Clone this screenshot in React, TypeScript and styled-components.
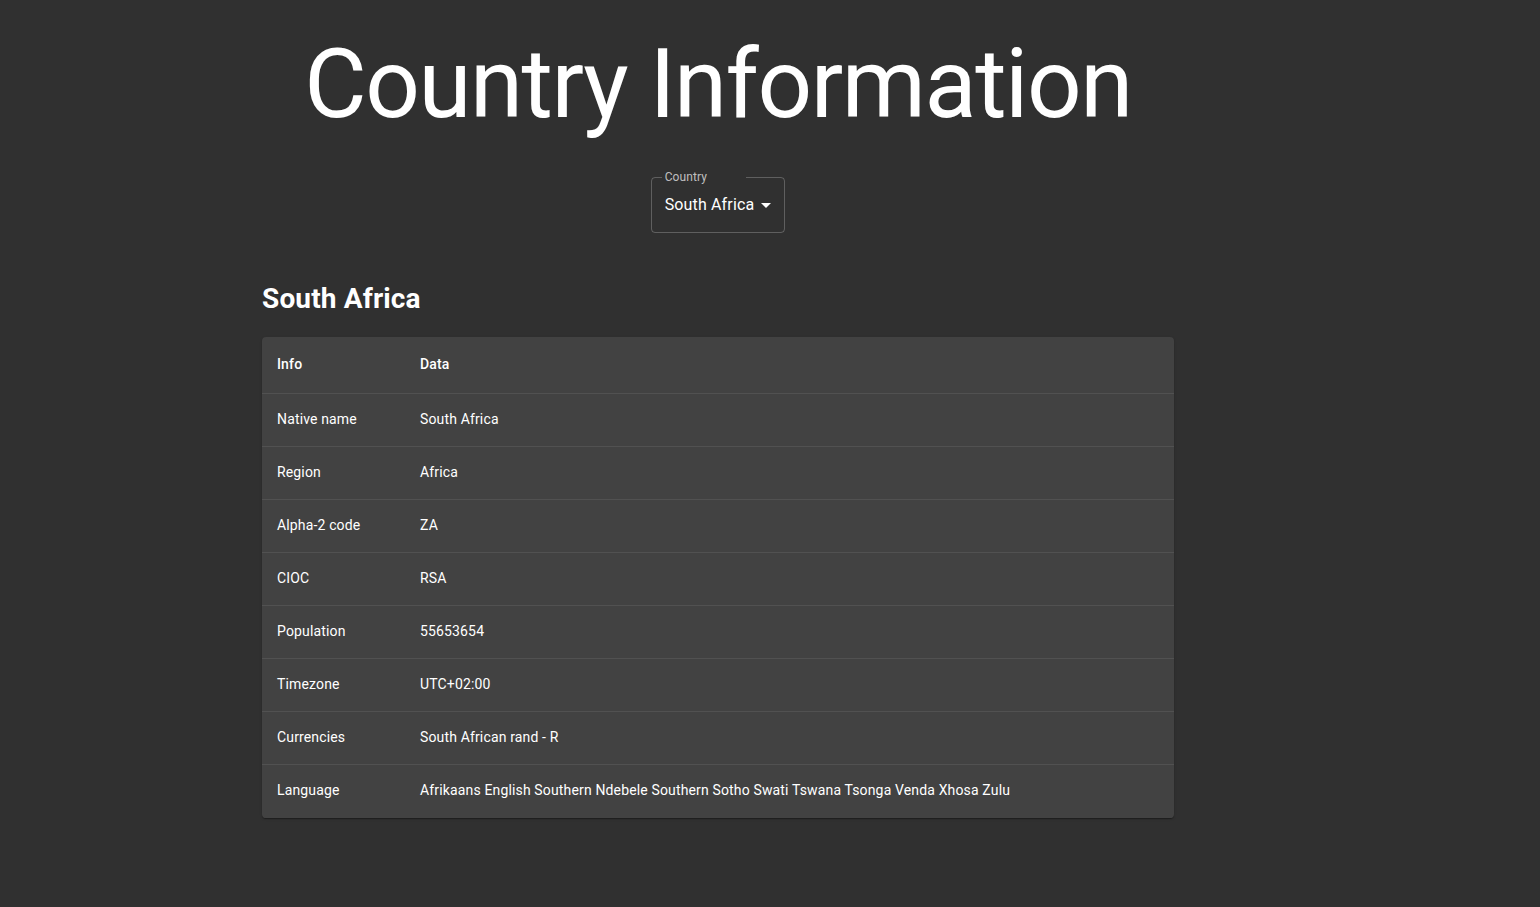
import React from "react";
import styled, { createGlobalStyle } from "styled-components";

const Global = createGlobalStyle`
  html, body { margin: 0; padding: 0; background: #303030; }
  body { font-family: Roboto, "Helvetica Neue", Arial, sans-serif; color: #fff; }
  * { box-sizing: border-box; }
`;

const Page = styled.div`
  width: 1540px;
  min-height: 907px;
  background: #303030;
  padding-top: 28px;
`;

const Container = styled.main`
  width: 960px;
  margin-left: 238px;
  padding: 0 24px;
  display: flex;
  flex-direction: column;
`;

const Title = styled.h1`
  margin: 0;
  font-family: Roboto, sans-serif;
  font-weight: 400;
  font-size: 96px;
  line-height: 112px;
  text-align: center;
  color: #fff;
  letter-spacing: -1.5px;
`;

const SelectRow = styled.div`
  display: flex;
  justify-content: center;
  margin-top: 37px;
`;

const SelectBox = styled.div`
  position: relative;
  height: 56px;
  border: 1px solid rgba(255, 255, 255, 0.23);
  border-radius: 4px;
  padding: 0 30px 1px 13px;
  display: flex;
  align-items: center;
  font-size: 16px;
  letter-spacing: 0.15px;
  color: #fff;
  cursor: pointer;
`;

const Notch = styled.span`
  position: absolute;
  top: -7px;
  left: 10px;
  width: 84px;
  height: 12px;
  background: #303030;
  padding-left: 3px;
  font-size: 12px;
  line-height: 12px;
  letter-spacing: 0.1px;
  color: rgba(255, 255, 255, 0.7);
`;

const Arrow = styled.svg`
  position: absolute;
  right: 6px;
  top: 15px;
  width: 24px;
  height: 24px;
  fill: #fff;
`;

const Heading = styled.h2`
  margin: 48px 0 0;
  font-size: 28px;
  font-weight: 700;
  line-height: 36px;
  letter-spacing: 0.15px;
  color: #fff;
`;

const Paper = styled.div`
  margin-top: 20px;
  background: #424242;
  border-radius: 4px;
  box-shadow: 0px 2px 1px -1px rgba(0,0,0,0.2), 0px 1px 1px 0px rgba(0,0,0,0.14), 0px 1px 3px 0px rgba(0,0,0,0.12);
  overflow: hidden;
`;

const Table = styled.table`
  width: 100%;
  border-collapse: collapse;
  font-size: 14px;
  letter-spacing: 0.15px;
`;

const Row = styled.tr<{ $last?: boolean }>`
  border-bottom: 1px solid ${(p) => (p.$last ? "#424242" : "#515151")};
`;

const Cell = styled.td<{ $head?: boolean; $first?: boolean }>`
  padding: ${(p) => (p.$head ? "17px 16px 19px 15px" : "15px 16px 17px 15px")};
  line-height: 20px;
  font-weight: ${(p) => (p.$head ? 500 : 400)};
  color: #fff;
  text-align: left;
  width: ${(p) => (p.$first ? "142px" : "auto")};
  vertical-align: middle;
  & + & { padding-left: 16px; }
`;

const rows: [string, string][] = [
  ["Native name", "South Africa"],
  ["Region", "Africa"],
  ["Alpha-2 code", "ZA"],
  ["CIOC", "RSA"],
  ["Population", "55653654"],
  ["Timezone", "UTC+02:00"],
  ["Currencies", "South African rand - R"],
  ["Language", "Afrikaans English Southern Ndebele Southern Sotho Swati Tswana Tsonga Venda Xhosa Zulu"],
];

export default function App() {
  return (
    <Page>
      <Global />
      <Container>
        <Title>Country Information</Title>
        <SelectRow>
          <SelectBox>
            <Notch>Country</Notch>
            South Africa
            <Arrow viewBox="0 0 24 24">
              <path d="M7 10l5 5 5-5z" />
            </Arrow>
          </SelectBox>
        </SelectRow>
        <Heading>South Africa</Heading>
        <Paper>
          <Table>
            <thead>
              <Row>
                <Cell as="th" $head $first>Info</Cell>
                <Cell as="th" $head>Data</Cell>
              </Row>
            </thead>
            <tbody>
              {rows.map(([k, v], i) => (
                <Row key={k} $last={i === rows.length - 1}>
                  <Cell $first>{k}</Cell>
                  <Cell>{v}</Cell>
                </Row>
              ))}
            </tbody>
          </Table>
        </Paper>
      </Container>
    </Page>
  );
}
